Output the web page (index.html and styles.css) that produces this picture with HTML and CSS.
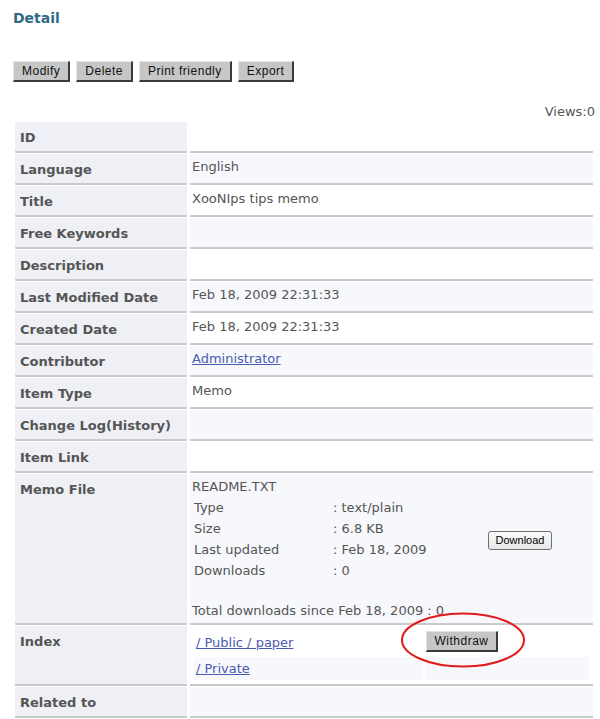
FILE: index.html
```html
<!DOCTYPE html>
<html>
<head>
<meta charset="utf-8">
<title>Detail</title>
<link rel="stylesheet" href="styles.css">
</head>
<body>
<div class="page">
  <h1 class="title">Detail</h1>
  <div class="actions">
    <button class="btn">Modify</button>
    <button class="btn">Delete</button>
    <button class="btn">Print friendly</button>
    <button class="btn">Export</button>
  </div>
  <div class="views">Views:0</div>
  <div class="detail">
    <div class="label">ID</div><div class="value"></div>
    <div class="label">Language</div><div class="value alt">English</div>
    <div class="label">Title</div><div class="value">XooNIps tips memo</div>
    <div class="label">Free Keywords</div><div class="value alt"></div>
    <div class="label">Description</div><div class="value"></div>
    <div class="label">Last Modified Date</div><div class="value alt">Feb 18, 2009 22:31:33</div>
    <div class="label">Created Date</div><div class="value">Feb 18, 2009 22:31:33</div>
    <div class="label">Contributor</div><div class="value alt"><a class="link" href="#">Administrator</a></div>
    <div class="label">Item Type</div><div class="value">Memo</div>
    <div class="label">Change Log(History)</div><div class="value alt"></div>
    <div class="label">Item Link</div><div class="value"></div>
    <div class="label">Memo File</div>
    <div class="value alt memo">
      <div class="line">README.TXT</div>
      <div class="fileinfo">
        <div class="fk">Type</div><div class="fv">: text/plain</div>
        <div class="dl"><button class="dlbtn">Download</button></div>
        <div class="fk">Size</div><div class="fv">: 6.8 KB</div>
        <div class="fk">Last updated</div><div class="fv">: Feb 18, 2009</div>
        <div class="fk">Downloads</div><div class="fv">: 0</div>
      </div>
      <div class="line total">Total downloads since Feb 18, 2009 : 0</div>
    </div>
    <div class="label">Index</div>
    <div class="value index">
      <div class="idx">
        <div class="ic"><a class="link" href="#">/ Public / paper</a></div>
        <div class="ic"><button class="btn wd">Withdraw</button></div>
        <div class="ic alt"><a class="link" href="#">/ Private</a></div>
        <div class="ic alt"></div>
      </div>
      <svg class="mark" width="126" height="58" viewBox="0 0 126 58"><ellipse cx="63" cy="29" rx="61" ry="26.5" fill="none" stroke="#e21a1a" stroke-width="2"/></svg>
    </div>
    <div class="label">Related to</div><div class="value alt"></div>
  </div>
</div>
</body>
</html>
```
FILE: styles.css
```css
html, body {
  margin: 0;
  padding: 0;
  background: #ffffff;
}
body {
  font-family: "DejaVu Sans", Verdana, sans-serif;
  font-size: 13px;
  color: #555555;
}
.page {
  padding: 10px 5px 0 13px;
}
.title {
  margin: 0;
  font-size: 14px;
  line-height: 17px;
  font-weight: bold;
  color: #2f6b86;
}
.actions {
  display: flex;
  gap: 6px;
  margin-top: 34px;
}
.btn {
  font-family: "Liberation Sans", Arial, sans-serif;
  font-size: 12px;
  letter-spacing: 0.5px;
  color: #111111;
  background: #c6c6c6;
  height: 21px;
  padding: 0 8px;
  border-style: solid;
  border-width: 1px 2px 2px 1px;
  border-color: #e4e4e4 #3a3a3a #3a3a3a #e4e4e4;
  border-radius: 0;
  margin: 0;
  line-height: 17px;
}
.views {
  margin-top: 22px;
  text-align: right;
  line-height: 16px;
}
.detail {
  margin: 2px 0 0 2px;
  width: 578px;
  display: grid;
  grid-template-columns: 172px 403px;
  column-gap: 3px;
  row-gap: 1px;
}
.label, .value {
  box-sizing: border-box;
  min-height: 31px;
  border-bottom: 2px solid #cacaca;
  line-height: 16px;
}
.label {
  background: #eef0f5;
  font-weight: bold;
  padding: 8px 5px 4px;
}
.value {
  background: #ffffff;
  padding: 5px 2px 4px;
}
.alt {
  background: #f7f8fc;
}
.link {
  color: #4a5bb2;
  text-decoration: underline;
}
.memo .line {
  line-height: 16px;
}
.fileinfo {
  margin-top: 2px;
  padding-left: 2px;
  display: grid;
  grid-template-columns: 137px 155px auto;
  grid-auto-rows: 21px;
  align-items: center;
}
.fv {
  padding-left: 2px;
}
.dl {
  grid-column: 3;
  grid-row: 1 / span 4;
  display: flex;
  align-items: center;
  padding-left: 2px;
  padding-top: 2px;
}
.memo .total {
  margin-top: 22px;
}
.dlbtn {
  font-family: "Liberation Sans", Arial, sans-serif;
  font-size: 11px;
  color: #000000;
  width: 64px;
  height: 19px;
  padding: 0;
  border: 1px solid #6f6f6f;
  border-radius: 3px;
  background: linear-gradient(#fbfbfb, #e6e6e6);
}
.index {
  position: relative;
  padding: 5px 2px 4px;
}
.idx {
  display: grid;
  grid-template-columns: 229px 164px;
  grid-template-rows: 25px 23px;
  column-gap: 2px;
  row-gap: 1px;
  margin-left: 2px;
}
.ic {
  padding-left: 2px;
  display: flex;
  align-items: center;
}
.ic:first-child {
  align-items: flex-start;
  padding-top: 4px;
}
.ic .wd {
  align-self: flex-start;
  width: 72px;
  padding: 0;
  margin-left: -1px;
}
.mark {
  position: absolute;
  left: 210px;
  top: -15px;
}
```
